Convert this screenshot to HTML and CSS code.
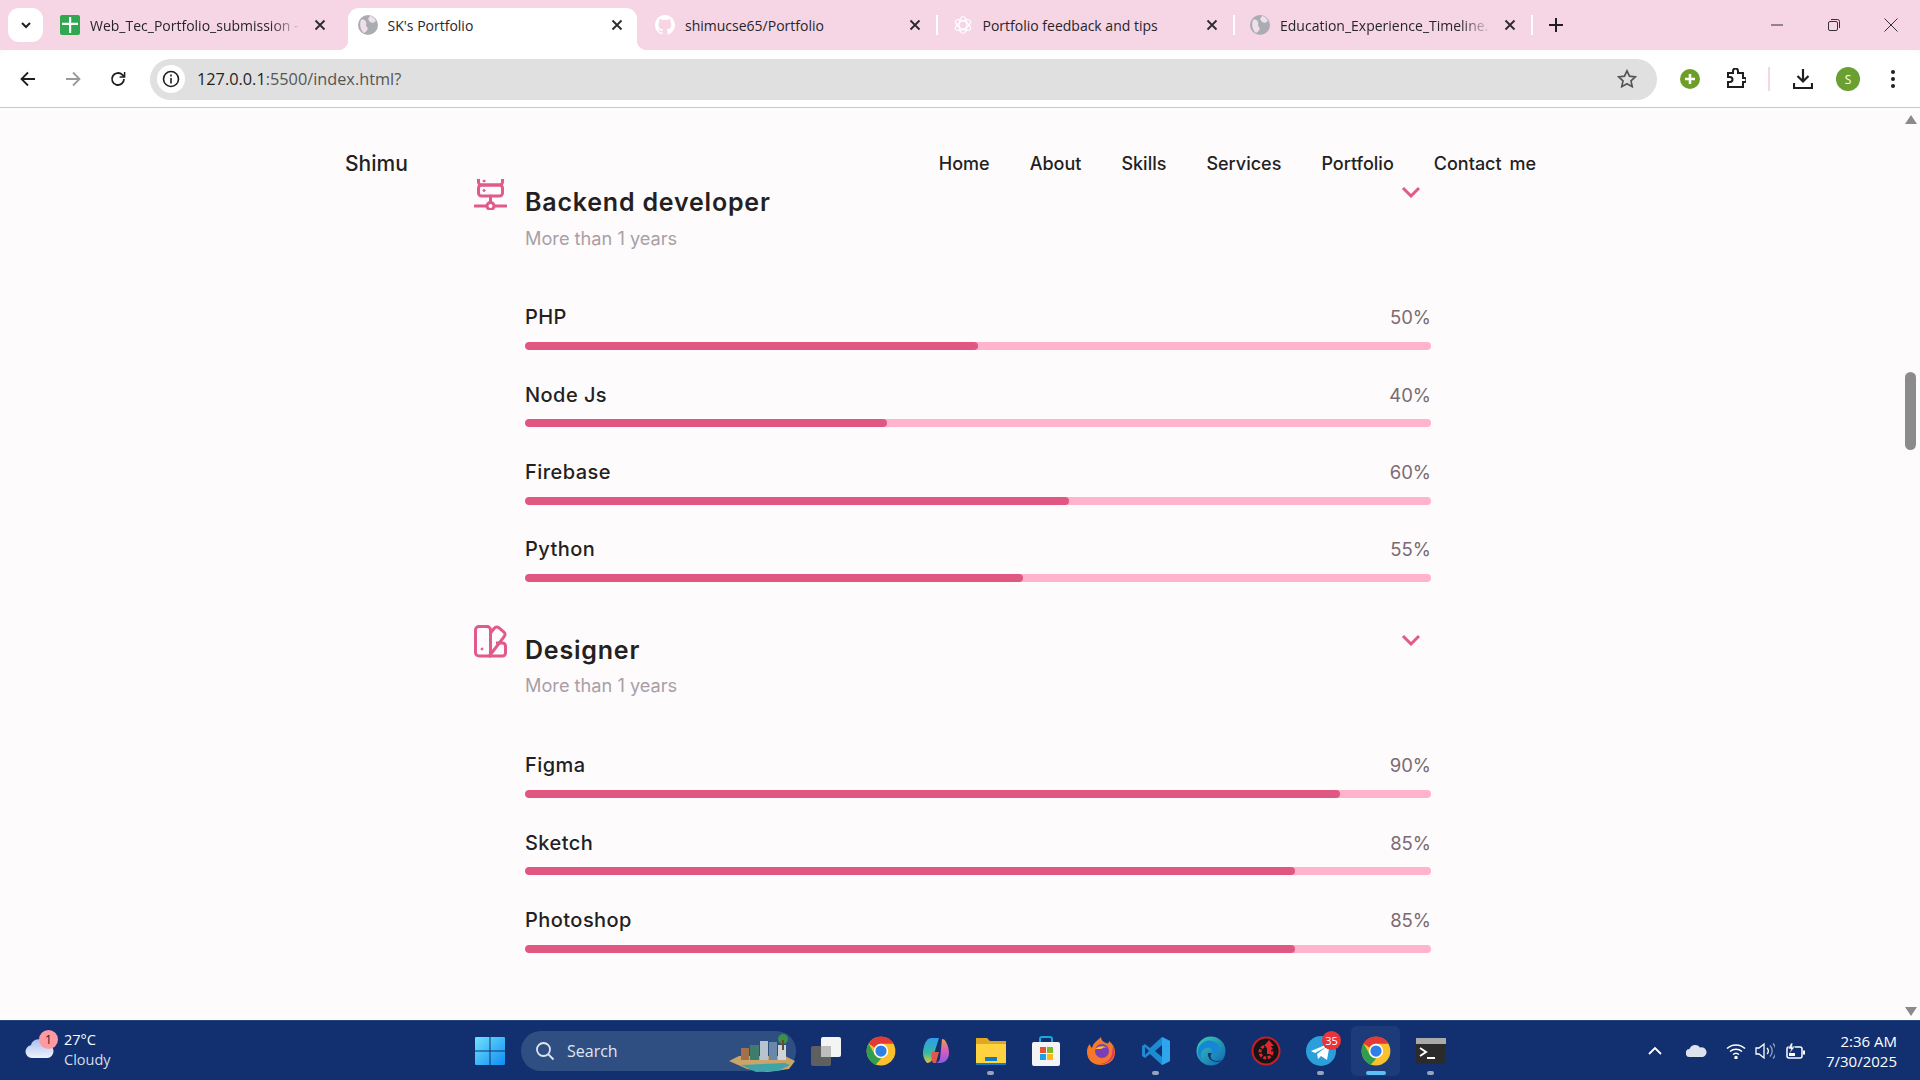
FILE: index.html
```html
<!DOCTYPE html>
<html lang="en">
<head>
<meta charset="utf-8">
<title>SK's Portfolio</title>
<link rel="stylesheet" href="styles.css">
</head>
<body>
<svg class="defs" width="0" height="0">
  <symbol id="globe" viewBox="0 0 20 20"><circle cx="10" cy="10" r="10" fill="#a9adb3"/><path d="M3 5c3-1 4 0 5 2s-1 3 1 5-1 5-3 6C3 16 1 10 3 5zM12 1c2 0 5 2 6 5l-3 2-3-1-2-3z" fill="#f0dfe8"/></symbol>
  <symbol id="x" viewBox="0 0 16 16"><path d="M3.500 3.500l9 9M12.500 3.500l-9 9" stroke="#2a2a2e" stroke-width="1.800" fill="none"/></symbol>
  <symbol id="chrome" viewBox="0 0 48 48"><circle cx="24" cy="24" r="23" fill="#fbc02d"/><path d="M24 1a23 23 0 0 1 20 11.500H24a12 12 0 0 0-10.400 6L4 12A23 23 0 0 1 24 1z" fill="#e53935"/><path d="M4 12l10 17.500a12 12 0 0 0 10.500 6.500L15 46.500C8 43 1 34 1 24c0-4 1-8 3-12z" fill="#2e9e4f"/><circle cx="24" cy="24" r="11.500" fill="#fff"/><circle cx="24" cy="24" r="9" fill="#2f7fe6"/></symbol>
  <symbol id="chev" viewBox="0 0 20 12"><path d="M2 2l8 8 8-8" stroke="#e2598b" stroke-width="3" fill="none"/></symbol>
</svg>

<div class="tabstrip">
  <div class="tabmenu"><svg width="14" height="14" viewBox="0 0 14 14"><path d="M3 5l4 4 4-4" stroke="#1f1f1f" stroke-width="2" fill="none"/></svg></div>
  <div class="tabs">
    <div class="tab">
      <svg class="fav" viewBox="0 0 20 20"><rect width="20" height="20" rx="2" fill="#2fa84f"/><path d="M9 2h2.200v5.800H18V10h-6.800v8H9v-8H2V7.800h7z" fill="#fff"/></svg>
      <span class="tab-title fade">Web_Tec_Portfolio_submission -</span>
      <svg class="close"><use href="#x"/></svg>
    </div>
    <div class="tab active">
      <svg class="fav"><use href="#globe"/></svg>
      <span class="tab-title">SK's Portfolio</span>
      <svg class="close"><use href="#x"/></svg>
    </div>
    <div class="tab">
      <svg class="fav" viewBox="0 0 20 20"><path d="M10 0a10 10 0 0 0-3.200 19.500c.5.100.7-.2.700-.5v-1.700c-2.800.6-3.400-1.300-3.400-1.300-.5-1.200-1.100-1.500-1.100-1.500-.9-.6.100-.6.100-.6 1 .1 1.500 1 1.500 1 .9 1.500 2.300 1.100 2.900.8.100-.6.300-1.100.6-1.300-2.200-.3-4.600-1.100-4.600-5 0-1.100.4-2 1-2.700-.1-.2-.4-1.300.1-2.700 0 0 .8-.3 2.800 1a9.500 9.500 0 0 1 5 0c1.900-1.300 2.800-1 2.800-1 .5 1.400.2 2.500.1 2.700.6.700 1 1.600 1 2.700 0 3.900-2.300 4.700-4.600 5 .4.300.7.900.7 1.900V19c0 .3.200.6.700.5A10 10 0 0 0 10 0z" fill="#fff"/></svg>
      <span class="tab-title">shimucse65/Portfolio</span>
      <svg class="close"><use href="#x"/></svg>
      <i class="sep"></i>
    </div>
    <div class="tab">
      <svg class="fav" viewBox="0 0 20 20" fill="none" stroke="#fff" stroke-width="1.200"><ellipse cx="10" cy="10" rx="8.500" ry="4" transform="rotate(30 10 10)"/><ellipse cx="10" cy="10" rx="8.500" ry="4" transform="rotate(-30 10 10)"/><ellipse cx="10" cy="10" rx="8.500" ry="4" transform="rotate(90 10 10)"/></svg>
      <span class="tab-title">Portfolio feedback and tips</span>
      <svg class="close"><use href="#x"/></svg>
      <i class="sep"></i>
    </div>
    <div class="tab">
      <svg class="fav"><use href="#globe"/></svg>
      <span class="tab-title fade">Education_Experience_Timeline.</span>
      <svg class="close"><use href="#x"/></svg>
      <i class="sep"></i>
    </div>
  </div>
  <svg class="newtab" width="16" height="16" viewBox="0 0 16 16"><path d="M8 1v14M1 8h14" stroke="#1f1f1f" stroke-width="2"/></svg>
  <div class="winctl">
    <svg width="14" height="14" viewBox="0 0 14 14"><path d="M1 7h12" stroke="#333" stroke-width="1"/></svg>
    <svg width="14" height="14" viewBox="0 0 14 14" fill="none" stroke="#333"><rect x="1.500" y="3.500" width="9" height="9" rx="1.500"/><path d="M4 1.500h6.500a2 2 0 0 1 2 2V10"/></svg>
    <svg width="14" height="14" viewBox="0 0 14 14"><path d="M.5.500l13 13M13.500.500l-13 13" stroke="#333" stroke-width="1"/></svg>
  </div>
</div>

<div class="toolbar">
  <div class="navbtns">
    <svg width="18" height="18" viewBox="0 0 18 18" fill="none" stroke="#1f1f1f" stroke-width="1.800"><path d="M16 9H2.500M9 2.500L2.500 9 9 15.500"/></svg>
    <svg width="18" height="18" viewBox="0 0 18 18" fill="none" stroke="#9a9a9a" stroke-width="1.800"><path d="M2 9h13.500M9 2.500L15.500 9 9 15.500"/></svg>
    <svg width="18" height="18" viewBox="0 0 18 18" fill="none" stroke="#1f1f1f" stroke-width="1.800"><path d="M15 9a6 6 0 1 1-1.800-4.300L15 6.500"/><path d="M15.600 2v5h-5" stroke-width="1.500"/></svg>
  </div>
  <div class="omnibox">
    <span class="site-info"><svg width="18" height="18" viewBox="0 0 18 18" fill="none" stroke="#1f1f1f" stroke-width="1.600"><circle cx="9" cy="9" r="7.500"/><path d="M9 8v5.500M9 4.500v2"/></svg></span>
    <span class="url"><b>127.0.0.1</b>:5500/index.html?</span>
    <svg class="star" width="20" height="20" viewBox="0 0 20 20"><path d="M10 1.800l2.500 5.400 5.900.7-4.400 4 1.200 5.800L10 14.800l-5.200 2.900L6 11.900l-4.400-4 5.900-.7z" fill="none" stroke="#555" stroke-width="1.700"/></svg>
  </div>
  <div class="tools">
    <svg width="20" height="20" viewBox="0 0 20 20"><circle cx="10" cy="10" r="10" fill="#6f9e28"/><path d="M10 5v10M5 10h10" stroke="#fff" stroke-width="2.500"/></svg>
    <svg width="20" height="22" viewBox="0 0 20 22" fill="none" stroke="#1f1f1f" stroke-width="2"><path d="M2 5h5V3a2.500 2.500 0 0 1 5 0v2h5v5h1.500a2 2 0 0 1 0 4H17v5H2v-5h2a2.500 2.500 0 0 0 0-5H2z"/></svg>
    <i class="tool-sep"></i>
    <svg width="20" height="22" viewBox="0 0 20 22" fill="none" stroke="#1f1f1f" stroke-width="2.200"><path d="M10 1v12M4.500 8l5.500 5.500L15.500 8M1 15v5h18v-5"/></svg>
    <span class="avatar">S</span>
    <svg width="6" height="20" viewBox="0 0 6 20"><circle cx="3" cy="3" r="2" fill="#1f1f1f"/><circle cx="3" cy="10" r="2" fill="#1f1f1f"/><circle cx="3" cy="17" r="2" fill="#1f1f1f"/></svg>
  </div>
</div>

<main class="page">
  <header class="site-header">
    <a class="logo">Shimu</a>
    <nav class="nav">
      <a>Home</a><a>About</a><a>Skills</a><a>Services</a><a>Portfolio</a><a>Contact me</a>
    </nav>
  </header>

  <section class="skills">
    <div class="group">
      <div class="group-head">
        <svg class="group-icon" viewBox="0 0 33 33" fill="none" stroke="#e2598b" stroke-width="3" stroke-linecap="round"><rect x="4.500" y="-6" width="24" height="14" rx="3"/><rect x="4.500" y="8" width="24" height="11" rx="3"/><path d="M16.500 19v6M1 29h11M21 29h11"/><circle cx="16.500" cy="29" r="3.500"/><circle cx="10" cy="4" r="1" fill="#e2598b" stroke-width="1"/><circle cx="10" cy="13.500" r="1" fill="#e2598b" stroke-width="1"/></svg>
        <div class="group-text">
          <h2 class="group-title">Backend developer</h2>
          <p class="group-sub">More than 1 years</p>
        </div>
        <svg class="group-chev"><use href="#chev"/></svg>
      </div>
      <div class="skill"><div class="skill-line"><span class="skill-name">PHP</span><span class="skill-pct">50%</span></div><div class="track"><div class="fill" style="width:50%"></div></div></div>
      <div class="skill"><div class="skill-line"><span class="skill-name">Node Js</span><span class="skill-pct">40%</span></div><div class="track"><div class="fill" style="width:40%"></div></div></div>
      <div class="skill"><div class="skill-line"><span class="skill-name">Firebase</span><span class="skill-pct">60%</span></div><div class="track"><div class="fill" style="width:60%"></div></div></div>
      <div class="skill"><div class="skill-line"><span class="skill-name">Python</span><span class="skill-pct">55%</span></div><div class="track"><div class="fill" style="width:55%"></div></div></div>
    </div>

    <div class="group">
      <div class="group-head">
        <svg class="group-icon" viewBox="0 0 33 33" fill="none" stroke="#e2598b" stroke-width="3" stroke-linejoin="round"><path d="M5 1.500h8a3.500 3.500 0 0 1 3.500 3.500v26H5A3.500 3.500 0 0 1 1.500 27.500V5A3.500 3.500 0 0 1 5 1.500z"/><path d="M16.500 8l4-5a3 3 0 0 1 4.200-.3l5.300 4.500a3 3 0 0 1 .3 4.200L15 31.500"/><path d="M22 18h6.500a3 3 0 0 1 3 3v7a3 3 0 0 1-3 3H15"/><circle cx="8" cy="24" r="1" fill="#e2598b" stroke-width="1"/></svg>
        <div class="group-text">
          <h2 class="group-title">Designer</h2>
          <p class="group-sub">More than 1 years</p>
        </div>
        <svg class="group-chev"><use href="#chev"/></svg>
      </div>
      <div class="skill"><div class="skill-line"><span class="skill-name">Figma</span><span class="skill-pct">90%</span></div><div class="track"><div class="fill" style="width:90%"></div></div></div>
      <div class="skill"><div class="skill-line"><span class="skill-name">Sketch</span><span class="skill-pct">85%</span></div><div class="track"><div class="fill" style="width:85%"></div></div></div>
      <div class="skill"><div class="skill-line"><span class="skill-name">Photoshop</span><span class="skill-pct">85%</span></div><div class="track"><div class="fill" style="width:85%"></div></div></div>
    </div>
  </section>

  <div class="scrollbar">
    <svg class="arrow" width="14" height="10" viewBox="0 0 14 10"><path d="M7 0l6 9H1z" fill="#8b8b8b"/></svg>
    <div class="thumb"></div>
    <svg class="arrow arrow-down" width="14" height="10" viewBox="0 0 14 10"><path d="M7 10L1 1h12z" fill="#8b8b8b"/></svg>
  </div>
</main>

<footer class="taskbar">
  <div class="weather">
    <span class="weather-icon">
      <svg width="30" height="20" viewBox="0 0 32 22"><defs><linearGradient id="cl" x1="0" y1="0" x2="0" y2="1"><stop offset="0" stop-color="#aebfee"/><stop offset="1" stop-color="#eef3fd"/></linearGradient></defs><path d="M8 22a7 7 0 0 1-1-13.900A9 9 0 0 1 24 7a7.500 7.500 0 0 1 1 15z" fill="url(#cl)"/></svg>
      <b class="weather-badge">1</b>
    </span>
    <div class="weather-text"><span>27°C</span><span class="dim">Cloudy</span></div>
  </div>

  <div class="center">
    <svg class="winlogo" width="30" height="30" viewBox="0 0 30 30">
      <defs><linearGradient id="w" x1="0" y1="0" x2="1" y2="1"><stop offset="0" stop-color="#6fe3fb"/><stop offset="1" stop-color="#0f8cf5"/></linearGradient></defs>
      <path d="M1 1h13.500v13.500H0V2a1 1 0 0 1 1-1zM15.500 1H29a1 1 0 0 1 1 1v12.500H15.500zM0 15.500h14.500V29H1a1 1 0 0 1-1-1zM15.500 15.500H30V28a1 1 0 0 1-1 1H15.500z" fill="url(#w)"/>
    </svg>
    <div class="search">
      <svg width="20" height="20" viewBox="0 0 20 20" fill="none" stroke="#dfe6f2" stroke-width="1.800"><circle cx="8.500" cy="8.500" r="6.500"/><path d="M13.500 13.500l5 5"/></svg>
      <span class="search-text">Search</span>
      <svg class="search-art" width="66" height="42" viewBox="0 0 66 42">
        <path d="M0 31l10-5h46l10 5-6 8-22 3-20-3z" fill="#c9a56a"/>
        <path d="M12 35l44-2 5 2-12 6-22 1z" fill="#3fa3a8"/>
        <rect x="12" y="18" width="8" height="12" fill="#a37049"/><rect x="21" y="15" width="9" height="15" fill="#3e7c6c"/><rect x="31" y="11" width="8" height="19" fill="#b9c3cf"/><rect x="40" y="12" width="8" height="18" fill="#6c88a8"/><rect x="49" y="15" width="8" height="15" fill="#cfd4d6"/>
        <circle cx="54" cy="9" r="5" fill="#3e8f4c"/><rect x="53" y="10" width="2" height="10" fill="#6b4a2d"/>
      </svg>
    </div>
    <div class="apps">
      <span class="app"><svg class="ico" viewBox="0 0 30 30"><rect x="0" y="10" width="20" height="20" rx="2" fill="#5f5f5f"/><rect x="10" y="1" width="20" height="20" rx="2" fill="#f4f4f4"/><rect x="10" y="10" width="10" height="11" fill="#bdbdbd"/></svg></span>
      <span class="app"><svg class="ico"><use href="#chrome"/></svg></span>
      <span class="app"><svg class="ico" viewBox="0 0 30 30"><defs><linearGradient id="cpa" x1="0" y1="0" x2="0" y2="1"><stop offset="0" stop-color="#2f9bf0"/><stop offset=".6" stop-color="#36b9a0"/><stop offset="1" stop-color="#e8c23a"/></linearGradient><linearGradient id="cpb" x1="0" y1="0" x2="0" y2="1"><stop offset="0" stop-color="#f0a04a"/><stop offset=".5" stop-color="#d65cc0"/><stop offset="1" stop-color="#8a5ce0"/></linearGradient></defs><path d="M10 2h8l-7 22c-1 2-3 3-5 3-3-3-4-7-4-10 0-6 3-15 8-15z" fill="url(#cpa)"/><path d="M21 3c2 0 3 1 4 3 2 4 3 7 3 11 0 6-4 10-9 10h-5c3 0 4-2 5-4l2-20z" fill="url(#cpb)"/><path d="M11 16h7l-3 11h-3c-2-3-2-7-1-11z" fill="#e0584c"/></svg></span>
      <span class="app running"><svg class="ico" viewBox="0 0 30 30"><path d="M0 2h11l3 3h16v24H0z" fill="#e0a820"/><path d="M0 8h30v21H0z" fill="#ffd23f"/><rect x="9" y="21" width="12" height="4" fill="#1878c8"/><rect x="0" y="27" width="30" height="2" fill="#1878c8"/></svg></span>
      <span class="app"><svg class="ico" viewBox="0 0 30 30"><path d="M9 7V3a2 2 0 0 1 2-2h8a2 2 0 0 1 2 2v4" fill="none" stroke="#19a7e0" stroke-width="2"/><rect x="1" y="6" width="28" height="24" rx="2" fill="#f4f4f4"/><rect x="9" y="11" width="6" height="6" fill="#e8542f"/><rect x="16" y="11" width="6" height="6" fill="#7fba2a"/><rect x="9" y="18" width="6" height="6" fill="#1ba1e2"/><rect x="16" y="18" width="6" height="6" fill="#fbb81b"/></svg></span>
      <span class="app"><svg class="ico" viewBox="0 0 30 30"><path d="M15 29C6 29 1 23 1 16c0-4 1-6 3-8 0 2 1 3 2 4 1-5 6-8 9-11 0 3 2 5 5 6 2 1 3 0 3-2 4 3 6 7 6 11 0 8-6 13-14 13z" fill="#f5792a"/><path d="M27 9c2 4 2 10-1 14s-9 6-13 5c6 0 12-4 13-10 .5-3 .5-6 1-9z" fill="#e8326a"/><circle cx="16" cy="15" r="7" fill="#7a3fb8"/><path d="M9 13c3-3 9-4 12-1-3-1-4 0-6 1z" fill="#fbbf2d"/></svg></span>
      <span class="app running"><svg class="ico" viewBox="0 0 30 30"><path d="M21 1l8 4v20l-8 4-12-11-5 4-3-2v-10l3-2 5 4z" fill="#1f8ad2"/><path d="M21 1l8 4v20l-8 4z" fill="#2ea5ec"/><path d="M21 9l-7 6 7 6z" fill="#113170"/><path d="M4 11l4 4-4 4z" fill="#113170"/></svg></span>
      <span class="app"><svg class="ico" viewBox="0 0 30 30"><defs><linearGradient id="ed" x1="0" y1="0" x2="1" y2="1"><stop offset="0" stop-color="#39d0b0"/><stop offset="1" stop-color="#0f63b8"/></linearGradient></defs><circle cx="15" cy="15" r="14.500" fill="url(#ed)"/><path d="M2 18C1 9 9 3 16 5c6 1 9 7 6 11-1 2-4 2-6 1 1-3-1-6-5-5-5 1-8 6-5 13-2-2-3-4-4-7z" fill="#1686d9"/><path d="M12 17c-1 5 4 9 9 9 2 0 4-1 5-2-5 2-10 1-11-2-1-2 0-4 1-5z" fill="#113170"/></svg></span>
      <span class="app"><svg class="ico" viewBox="0 0 30 30"><circle cx="15" cy="15" r="13.500" fill="#141414" stroke="#c81e28" stroke-width="2"/><circle cx="15" cy="16" r="6" fill="none" stroke="#e0262f" stroke-width="3" stroke-dasharray="3 1.500"/><path d="M18 4l5 6h-3v8h-4v-8h-3z" fill="#e0262f"/></svg></span>
      <span class="app running"><svg class="ico" viewBox="0 0 30 30"><circle cx="15" cy="15" r="15" fill="#2a9fd9"/><path d="M5 15l19-8-3 17-6-4-3 3-1-5 9-7-11 6z" fill="#fff"/></svg><b class="app-badge">35</b></span>
      <span class="app active"><svg class="ico"><use href="#chrome"/></svg></span>
      <span class="app running"><svg class="ico" viewBox="0 0 30 30"><rect y="2" width="30" height="26" rx="2" fill="#2b2b2b"/><rect y="2" width="30" height="6" fill="#a9a9a9"/><path d="M4 12l6 4-6 4M11 22h8" stroke="#fff" stroke-width="2" fill="none"/></svg></span>
    </div>
  </div>

  <div class="tray">
    <svg class="tray-chev" width="14" height="9" viewBox="0 0 14 9"><path d="M1 8l6-6 6 6" stroke="#fff" stroke-width="1.800" fill="none"/></svg>
    <svg class="tray-cloud" width="21" height="13" viewBox="0 0 21 13"><path d="M4 13a4 4 0 0 1-.5-8A6 6 0 0 1 14 3.500 4.500 4.500 0 0 1 17 13z" fill="#dce3ee"/></svg>
    <svg class="tray-wifi" width="20" height="16" viewBox="0 0 20 16" fill="none" stroke="#fff" stroke-width="1.500"><path d="M1 5.500a13 13 0 0 1 18 0M4 8.500a9 9 0 0 1 12 0M7 11.500a4.500 4.500 0 0 1 6 0"/><circle cx="10" cy="14.500" r="1" fill="#fff"/></svg>
    <svg class="tray-vol" width="20" height="18" viewBox="0 0 20 18" fill="none" stroke="#fff" stroke-width="1.300"><path d="M1 6h3l5-4v14l-5-4H1z"/><path d="M12 6a4 4 0 0 1 0 6"/><path d="M15 3.500a8 8 0 0 1 0 11M18 1.500a11 11 0 0 1 0 15" stroke="#8ba0c4"/></svg>
    <svg class="tray-batt" width="20" height="18" viewBox="0 0 20 18" fill="none" stroke="#fff" stroke-width="1.500"><rect x="1" y="5" width="15" height="11" rx="2"/><path d="M18 8.500v4" stroke-width="2"/><path d="M5 1L2 7h3l-2 5 6-7H6l1-4z" fill="#fff" stroke="#12306f" stroke-width=".6"/><rect x="3" y="11" width="6" height="3" fill="#fff" stroke="none"/></svg>
    <div class="clock"><span>2:36 AM</span><span>7/30/2025</span></div>
  </div>
</footer>
</body>
</html>
```

FILE: styles.css
```css
* { box-sizing: border-box; margin: 0; padding: 0; }
html, body { width: 1920px; height: 1080px; overflow: hidden; }
body { display: flex; flex-direction: column; font-family: "Open Sans", "Liberation Sans", sans-serif; background: #fefbfd; }
.defs { position: absolute; }

/* tab strip */
.tabstrip { height: 50px; background: #f6d5e5; display: flex; align-items: center; flex: none; padding-left: 8px; }
.tabmenu { width: 35px; height: 34px; background: #fff; border-radius: 11px; display: flex; align-items: center; justify-content: center; margin-right: 4px; flex: none; }
.tabs { display: flex; height: 50px; flex: none; }
.tab { width: 297.500px; height: 50px; position: relative; display: flex; align-items: center; padding-left: 13px; font-size: 14px; color: #26262a; flex: none; }
.tab.active::before { content: ""; position: absolute; left: 3px; right: 5px; top: 8px; bottom: 0; background: #fff; border-radius: 11px 11px 0 0; }
.tab.active::after { content: ""; position: absolute; left: -7px; right: -5px; bottom: 0; height: 10px; background:
  radial-gradient(circle at 0 0, #f6d5e5 10px, #fff 10.500px) left bottom / 10px 10px no-repeat,
  radial-gradient(circle at 100% 0, #f6d5e5 10px, #fff 10.500px) right bottom / 10px 10px no-repeat; }
.fav { width: 20px; height: 20px; margin-right: 10px; flex: none; position: relative; z-index: 1; }
.tab-title { flex: 1; white-space: nowrap; overflow: hidden; position: relative; z-index: 1; }
.fade { -webkit-mask-image: linear-gradient(90deg, #000 85%, transparent 100%); mask-image: linear-gradient(90deg, #000 85%, transparent 100%); }
.close { width: 16px; height: 16px; margin: 0 17px 0 10px; flex: none; position: relative; z-index: 1; }
.sep { position: absolute; right: 2px; top: 15px; width: 2px; height: 20px; background: #fff; }
.newtab { margin-left: 13px; flex: none; }
.winctl { margin-left: auto; display: flex; gap: 43px; padding-right: 22px; }

/* toolbar */
.toolbar { height: 58px; background: #fff; border-radius: 10px 10px 0 0; border-bottom: 1px solid #c8c8c8; display: flex; align-items: center; flex: none; padding-top: 1px; }
.navbtns { display: flex; gap: 27px; padding-left: 19px; width: 150px; align-items: center; }
.omnibox { width: 1507px; height: 41px; background: #e0e0e0; border-radius: 21px; display: flex; align-items: center; padding: 0 20px 0 7px; }
.site-info { width: 28px; height: 28px; background: #fff; border-radius: 50%; display: flex; align-items: center; justify-content: center; flex: none; }
.url { margin-left: 12px; font-size: 16.300px; color: #555; flex: 1; }
.url b { font-weight: 400; color: #1f1f1f; }
.tools { display: flex; align-items: center; padding-left: 23px; flex: 1; }
.tool-sep { width: 2px; height: 24px; background: #f6d5e5; margin: 0 23px 0 22px; }
.tools svg:nth-child(2) { margin-left: 26px; }
.avatar { width: 24px; height: 24px; background: #6a9f32; border-radius: 50%; color: #fff; font-size: 12px; display: flex; align-items: center; justify-content: center; margin: 0 0 0 23px; }
.tools svg:last-child { margin-left: 30px; }

/* page */
.page { flex: 1; min-height: 0; position: relative; overflow: hidden; background: #fefbfd; color: #241f21; font-family: Inter, "Liberation Sans", sans-serif; }
.site-header { height: 71px; background: #fefbfd; position: relative; z-index: 2; display: flex; align-items: center; padding: 40px 0 0 345px; width: 1536px; }
.logo { font-size: 21px; font-weight: 500; }
.nav { margin-left: auto; display: flex; gap: 40px; font-size: 18px; font-weight: 500; word-spacing: 3px; }
.skills { margin-top: -2px; padding-left: 474px; }
.group { width: 957px; margin-bottom: 16.670px; }
.group-head { height: 122px; display: flex; align-items: flex-start; }
.group-icon { width: 33px; height: 33px; margin-right: 18px; flex: none; }
.group-text { flex: 1; padding-top: 9px; }
.group-title { font-size: 25px; font-weight: 600; line-height: 32px; letter-spacing: .8px; }
.group-sub { font-size: 18.200px; color: #a99fa5; line-height: 24px; margin-top: 7.500px; }
.group-chev { width: 20px; height: 12px; margin: 9px 10px 0 0; flex: none; }
.skill { margin-left: 51px; width: 906px; padding-bottom: 26.330px; }
.skill-line { height: 36px; margin-bottom: 7px; padding-top: .6px; display: flex; align-items: center; justify-content: space-between; }
.skill-name { font-size: 20px; font-weight: 500; letter-spacing: .45px; }
.skill-pct { font-size: 18.500px; color: #7a6b72; }
.track { height: 8px; background: #ffb3cd; border-radius: 4px; overflow: hidden; }
.fill { height: 100%; background: #e05782; border-radius: 4px; }

/* scrollbar overlay */
.scrollbar { position: absolute; top: 0; right: 0; bottom: 0; width: 16px; }
.arrow { position: absolute; left: 0; top: 7px; }
.arrow-down { top: auto; bottom: 4px; }
.thumb { position: absolute; left: 1px; top: 264px; width: 11px; height: 78px; background: #8b8b8b; border-radius: 6px; }

/* taskbar */
.taskbar { height: 60px; flex: none; background: #12306f; border-top: 1px solid #26457c; display: flex; align-items: center; color: #fff; font-family: "Open Sans", "Liberation Sans", sans-serif; }
.weather { width: 475px; display: flex; align-items: center; padding-left: 24px; flex: none; }
.weather-icon { position: relative; width: 40px; height: 40px; display: flex; align-items: flex-end; padding-bottom: 13px; flex: none; }
.weather-badge { position: absolute; left: 15px; top: -1px; width: 19px; height: 19px; border-radius: 50%; background: #ff9aa2; color: #2a1a1a; font-size: 12px; font-weight: 400; display: flex; align-items: center; justify-content: center; }
.weather-text { display: flex; flex-direction: column; font-size: 14.500px; line-height: 20px; margin-top: -2px; }
.dim { color: #d6dce8; }
.center { display: flex; align-items: center; flex: none; }
.winlogo { flex: none; margin-right: 16px; }
.search { width: 275px; height: 40px; border-radius: 20px; background: #2f4f82; display: flex; align-items: center; padding-left: 14px; position: relative; }
.search-text { margin-left: 12px; font-size: 16px; color: #dfe6f2; }
.search-art { position: absolute; right: 1px; top: -1px; }
.apps { display: flex; margin-left: 2px; }
.app { width: 55px; height: 50px; display: flex; align-items: center; justify-content: center; position: relative; border-radius: 6px; }
.ico { width: 30px; height: 30px; }
.app.running::after, .app.active::after { content: ""; position: absolute; left: 24px; bottom: 1px; width: 7px; height: 4px; border-radius: 2px; background: #98a4bd; }
.app.active { background: #1d3b78; width: 49px; margin: 0 3px; }
.app.active::after { width: 20px; left: 15px; background: #5cc0f5; }
.app-badge { position: absolute; top: 5px; left: 29px; min-width: 19px; height: 19px; border-radius: 50%; background: #e8343a; font-size: 11px; font-weight: 400; display: flex; align-items: center; justify-content: center; }
.tray { margin-left: auto; display: flex; align-items: center; padding-right: 23px; }
.tray-chev { margin-right: 24px; }
.tray-cloud { margin-right: 19px; }
.tray-wifi { margin-right: 9px; }
.tray-vol { margin-right: 11px; }
.tray-batt { margin-right: 20px; }
.clock { display: flex; flex-direction: column; align-items: flex-end; font-size: 15px; line-height: 20px; }
```
